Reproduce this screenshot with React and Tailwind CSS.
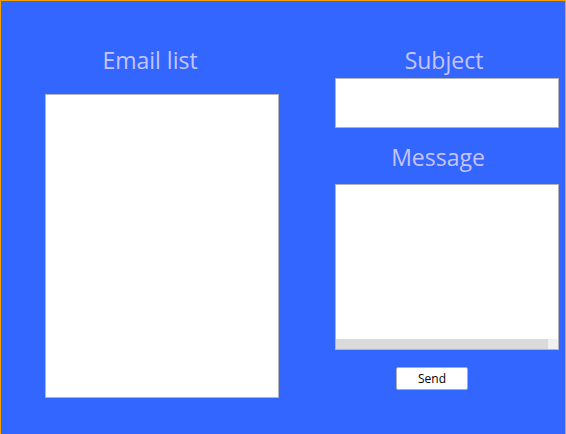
export default function App() {
  const font = { fontFamily: '"Open Sans", "Noto Sans", sans-serif' };
  return (
    <div className="w-[566px] h-[434px] box-border bg-[#3366ff] border-t border-l border-r border-[#f5a000] flex" style={font}>
      <div className="ml-[44px] w-[234px] flex flex-col">
        <div className="mt-[44px] h-[30px] leading-[30px] text-[23px] text-[#c6c4ff] text-center pr-[24px]">Email list</div>
        <div className="mt-[19px] h-[304px] bg-white border border-[#b4b4b4]"></div>
      </div>
      <div className="ml-[56px] w-[224px] flex flex-col">
        <div className="mt-[44px] h-[30px] leading-[30px] text-[23px] text-[#c6c4ff] text-center pr-[6px]">Subject</div>
        <div className="mt-[3px] h-[50px] bg-white border border-[#b4b4b4]"></div>
        <div className="mt-[14px] h-[30px] leading-[30px] text-[23px] text-[#c6c4ff] text-center pr-[18px]">Message</div>
        <div className="mt-[12px] h-[166px] bg-white border border-[#b4b4b4] flex flex-col">
          <div className="flex-1"></div>
          <div className="h-[10px] flex">
            <div className="flex-1 bg-[#dadada]"></div>
            <div className="w-[10px] bg-[#f0f0f0]"></div>
          </div>
        </div>
        <button className="mt-[17px] ml-[61px] w-[72px] h-[23px] bg-white border border-[#adadad] rounded-[2px] text-[12px] text-black leading-none">Send</button>
      </div>
    </div>
  );
}
